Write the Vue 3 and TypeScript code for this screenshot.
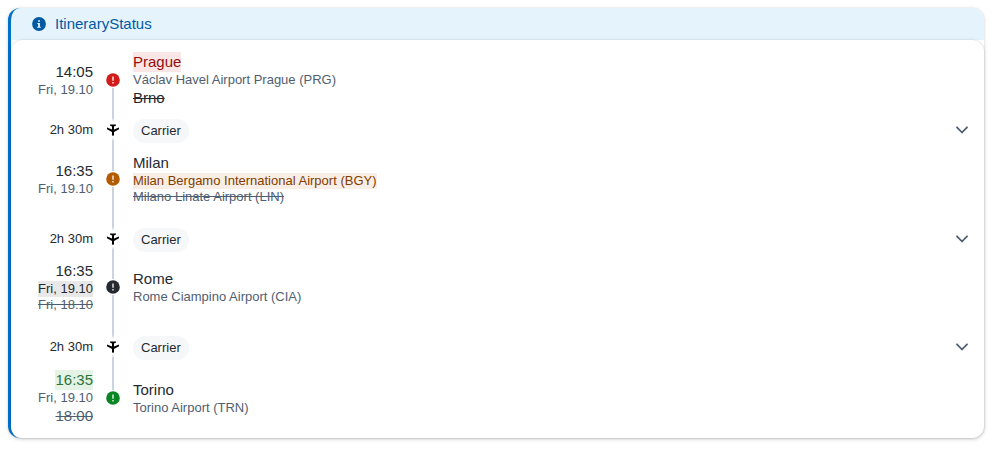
<script setup lang="ts">
type Tone = 'critical' | 'warning' | 'neutral' | 'success'
interface Line {
  text: string
  kind: 'large' | 'small'
  mark?: boolean
  old?: boolean
  muted?: boolean
}
interface Stop {
  tone: Tone
  times: Line[]
  places: Line[]
  lead?: number
  trail?: number
}

const stops: Stop[] = [
  {
    tone: 'critical',
    times: [{ text: '14:05', kind: 'large' }, { text: 'Fri, 19.10', kind: 'small' }],
    places: [
      { text: 'Prague', kind: 'large', mark: true },
      { text: 'Václav Havel Airport Prague (PRG)', kind: 'small' },
      { text: 'Brno', kind: 'large', old: true },
    ],
    lead: 11,
    trail: 10,
  },
  {
    tone: 'warning',
    times: [{ text: '16:35', kind: 'large' }, { text: 'Fri, 19.10', kind: 'small' }],
    places: [
      { text: 'Milan', kind: 'large' },
      { text: 'Milan Bergamo International Airport (BGY)', kind: 'small', mark: true },
      { text: 'Milano Linate Airport (LIN)', kind: 'small', old: true },
    ],
    lead: 22.6,
    trail: 9.4,
  },
  {
    tone: 'neutral',
    times: [
      { text: '16:35', kind: 'large' },
      { text: 'Fri, 19.10', kind: 'small', mark: true },
      { text: 'Fri, 18.10', kind: 'small', old: true },
    ],
    places: [{ text: 'Rome', kind: 'large' }, { text: 'Rome Ciampino Airport (CIA)', kind: 'small' }],
    lead: 23,
    trail: 10,
  },
  {
    tone: 'success',
    times: [
      { text: '16:35', kind: 'large', mark: true },
      { text: 'Fri, 19.10', kind: 'small' },
      { text: '18:00', kind: 'large', old: true, muted: true },
    ],
    places: [{ text: 'Torino', kind: 'large' }, { text: 'Torino Airport (TRN)', kind: 'small' }],
  },
]

const lineClass = (l: Line) => [l.kind, { mark: l.mark, old: l.old, muted: l.muted }]
</script>

<template>
  <section class="card">
    <header class="status">
      <svg class="info" viewBox="0 0 16 16">
        <circle cx="8" cy="8" r="6.9" fill="currentColor" />
        <path d="M7.1 4.2h1.8v1.6H7.1zM6.3 7h2.6v3.7h.9v1H6.2v-1h.9V8h-.8z" fill="#e5f3fd" />
      </svg>
      <span>ItineraryStatus</span>
    </header>
    <div class="body">
      <template v-for="(stop, i) in stops" :key="i">
        <div class="row" :class="stop.tone">
          <div class="times">
            <span v-for="t in stop.times" :key="t.text" :class="lineClass(t)">{{ t.text }}</span>
          </div>
          <div class="rail">
            <i class="track" :class="{ hidden: i === 0 }"></i>
            <svg class="dot" viewBox="0 0 16 16">
              <circle cx="8" cy="8" r="6.8" fill="currentColor" />
              <path d="M7.2 4.6h1.6v4.2H7.2zM7.2 9.9h1.6v1.5H7.2z" fill="#fff" fill-opacity=".8" />
            </svg>
            <i class="track" :class="{ hidden: i === stops.length - 1 }"></i>
          </div>
          <div class="places">
            <span v-for="p in stop.places" :key="p.text" :class="lineClass(p)">{{ p.text }}</span>
          </div>
        </div>
        <div v-if="stop.lead" class="row" :style="{ '--lead': stop.lead + 'px', '--trail': stop.trail + 'px' }">
          <div class="duration">2h 30m</div>
          <div class="rail">
            <i class="track before"></i>
            <svg class="plane" viewBox="0 0 16 16">
              <path d="M5 2.5h6v1L9 4.4v3.1l5-1.9v1.7L9 10v3L8 14.2 7 13v-3L2 7.3V5.6l5 1.9V4.4l-2-.9z" fill="#000" />
            </svg>
            <i class="track after"></i>
          </div>
          <div class="carrier">
            <span class="badge">Carrier</span>
            <svg class="chevron" viewBox="0 0 16 16">
              <path d="M3 5.3l5 5.2 5-5.2" fill="none" stroke="#4f5e71" stroke-width="1.8" stroke-linecap="round" stroke-linejoin="round" />
            </svg>
          </div>
        </div>
      </template>
    </div>
  </section>
</template>

<style>
body {
  background: #fff;
}
</style>

<style scoped>
.card {
  box-sizing: border-box;
  width: 976px;
  height: 430px;
  margin: 8px;
  border-left: 3px solid #0070c9;
  border-radius: 12px;
  box-shadow: 0 0 2px rgba(37, 42, 49, .16), 0 1px 4px rgba(37, 42, 49, .12);
  background: linear-gradient(#e5f3fd 32px, #fff 32px);
  font-family: "Liberation Sans", Arial, sans-serif;
  color: #252a31;
}
.status {
  box-sizing: border-box;
  height: 32px;
  padding-left: 20px;
  display: flex;
  align-items: center;
  gap: 8px;
  color: #005aa3;
  font-size: 15px;
  line-height: 20px;
}
.info {
  width: 16px;
  height: 16px;
}
.body {
  box-sizing: border-box;
  height: 398px;
  padding: 12px 14px 12px 12px;
  border-radius: 12px;
  background: #fff;
  box-shadow: 0 0 2px rgba(37, 42, 49, .16), 0 1px 4px rgba(37, 42, 49, .12);
}
.row {
  display: grid;
  grid-template-columns: 70px 40px 1fr;
}
.times,
.places {
  display: flex;
  flex-direction: column;
  justify-content: center;
  align-items: flex-start;
}
.times {
  align-items: flex-end;
}
.large {
  font-size: 15px;
  line-height: 20px;
}
.small {
  font-size: 13px;
  line-height: 16px;
  color: #4f5e71;
}
.old {
  text-decoration: line-through;
}
.muted {
  color: #4f5e71;
}
.critical .mark { color: #970c0c; background: #fae6e6; }
.warning .mark { color: #803d00; background: #f9eee6; }
.neutral .mark { color: #252a31; background: #e8e8e8; }
.success .mark { color: #2b7336; background: #e4f3e6; }
.rail {
  display: flex;
  flex-direction: column;
  align-items: center;
}
.track {
  flex: 1;
  width: 2px;
  background: #cad4e0;
}
.hidden {
  visibility: hidden;
}
.dot {
  width: 16px;
  height: 16px;
}
.critical .dot { color: #d21c1c; }
.warning .dot { color: #b25b00; }
.neutral .dot { color: #252a31; }
.success .dot { color: #078623; }
.before {
  flex: none;
  height: calc(var(--lead) + 3px);
  background: linear-gradient(#cad4e0 calc(100% - 4px), #fff);
}
.after {
  background: linear-gradient(#fff, #cad4e0 4px);
}
.plane {
  width: 16px;
  height: 16px;
  margin-bottom: -1px;
}
.duration {
  padding-top: calc(var(--lead) + 3px);
  font-size: 13px;
  line-height: 16px;
  text-align: right;
}
.carrier {
  display: flex;
  justify-content: space-between;
  padding: var(--lead) 0 var(--trail);
}
.badge {
  height: 24px;
  padding: 0 8px;
  border-radius: 12px;
  background: #f5f7f9;
  font-size: 13px;
  line-height: 24px;
}
.chevron {
  width: 16px;
  height: 16px;
  margin-top: 3px;
}
</style>
